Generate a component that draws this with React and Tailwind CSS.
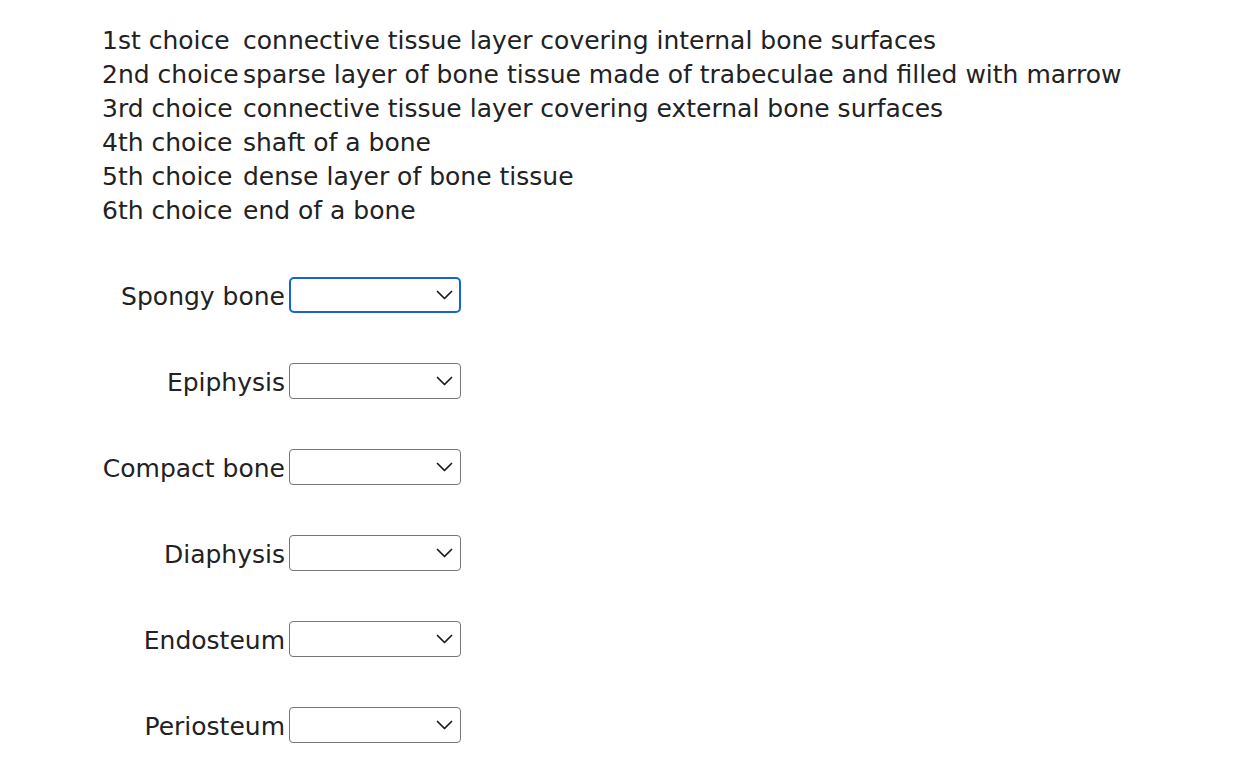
import { useState } from 'react';

const choices = [
  ['1st choice', 'connective tissue layer covering internal bone surfaces'],
  ['2nd choice', 'sparse layer of bone tissue made of trabeculae and filled with marrow'],
  ['3rd choice', 'connective tissue layer covering external bone surfaces'],
  ['4th choice', 'shaft of a bone'],
  ['5th choice', 'dense layer of bone tissue'],
  ['6th choice', 'end of a bone'],
];

const terms = ['Spongy bone', 'Epiphysis', 'Compact bone', 'Diaphysis', 'Endosteum', 'Periosteum'];

function Chevron() {
  return (
    <svg width="17" height="10" viewBox="0 0 17 10" fill="none" className="pointer-events-none absolute right-[8px] top-1/2 -translate-y-1/2">
      <path d="M1.5 1.5 L8.5 8.5 L15.5 1.5" stroke="#1a1a1a" strokeWidth="1.7" strokeLinecap="round" strokeLinejoin="round" />
    </svg>
  );
}

export default function App() {
  const [answers, setAnswers] = useState({});

  return (
    <div className="min-h-screen bg-white text-[#222] pl-[102px] pt-[24px] font-['DejaVu_Sans',sans-serif] text-[25px]">
      <div className="flex flex-col">
        {choices.map(([label, text]) => (
          <div key={label} className="flex h-[34px] items-center whitespace-nowrap">
            <span className="w-[141px] shrink-0">{label}</span>
            <span>{text}</span>
          </div>
        ))}
      </div>

      <div className="flex flex-col -mt-[1px]">
        {terms.map((term, i) => (
          <div key={term} className="mt-[50px] flex items-center gap-[4px]">
            <label className="w-[183px] text-right leading-none pt-[2px] whitespace-nowrap">{term}</label>
            <div className="relative">
              <select
                value={answers[term] || ''}
                onChange={(e) => setAnswers({ ...answers, [term]: e.target.value })}
                className={
                  i === 0
                    ? 'block h-[36px] w-[172px] appearance-none rounded-[5px] border-2 border-[#1764d0] bg-white px-2 text-base outline-none'
                    : 'block h-[36px] w-[172px] appearance-none rounded-[4px] border border-[#767676] bg-white px-2 text-base outline-none'
                }
              >
                <option value=""></option>
                {choices.map(([label]) => (
                  <option key={label} value={label}>{label}</option>
                ))}
              </select>
              <Chevron />
            </div>
          </div>
        ))}
      </div>
    </div>
  );
}
